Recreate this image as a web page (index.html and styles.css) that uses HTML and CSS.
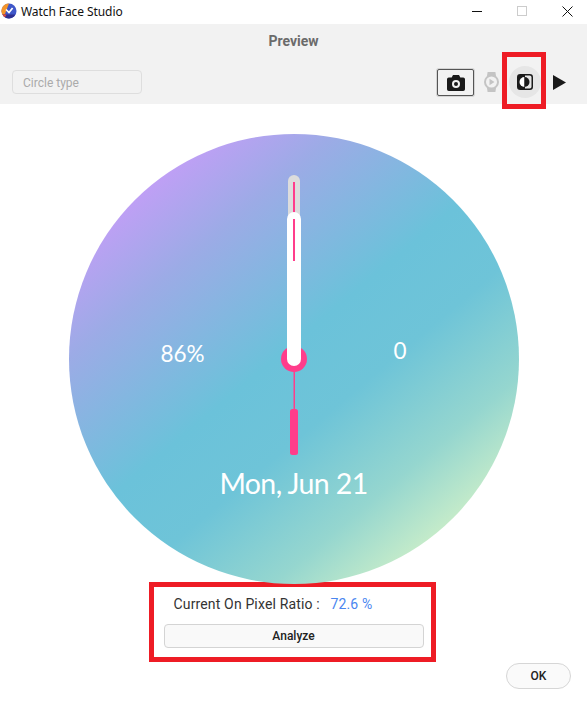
FILE: index.html
```html
<!DOCTYPE html>
<html lang="en">
<head>
<meta charset="utf-8">
<title>Watch Face Studio</title>
<link rel="stylesheet" href="styles.css">
</head>
<body>
<div class="app">
  <div class="titlebar">
    <svg class="logo" width="16" height="16" viewBox="0 0 16 16">
      <circle cx="8" cy="8" r="7.500" fill="#3f57c9"/>
      <path d="M8 .5A7.5 7.5 0 0 0 3 13.6L8 .5z" fill="#f4952b"/>
      <path d="M1.5 11.6A7.5 7.5 0 0 0 8 15.5a7.5 7.5 0 0 0 6.400-3.900z" fill="#2f2f8f"/>
      <path d="M1.5 11.6A7.5 7.5 0 0 0 4 14.300l1.500-2.700z" fill="#e4483c"/>
      <path d="M5 6.500l3 3 3.600-4.500" fill="none" stroke="#fff" stroke-width="1.700"/>
    </svg>
    <span class="app-name">Watch Face Studio</span>
    <div class="window-controls">
      <svg width="10" height="10" viewBox="0 0 10 10"><path d="M0 5.500h10" stroke="#111" stroke-width="1"/></svg>
      <svg width="10" height="10" viewBox="0 0 10 10"><rect x=".5" y=".5" width="9" height="9" fill="none" stroke="#ccc"/></svg>
      <svg width="11" height="11" viewBox="0 0 11 11"><path d="M.5.5l10 10M10.500.5l-10 10" stroke="#111" stroke-width="1"/></svg>
    </div>
  </div>

  <header class="header">
    <div class="header-title">Preview</div>
    <div class="toolbar">
      <div class="select">Circle type</div>
      <div class="tools">
        <button class="tool-camera" type="button">
          <svg width="18" height="16" viewBox="0 0 18 16">
            <path fill="#1a1a1a" d="M6 0h6l1.300 2.500H16.200A1.800 1.800 0 0 1 18 4.300v9.900a1.800 1.800 0 0 1-1.800 1.800H1.800A1.800 1.800 0 0 1 0 14.200V4.300a1.800 1.800 0 0 1 1.800-1.800H4.700z"/>
            <circle cx="9" cy="9" r="4" fill="#f2f2f2"/>
            <circle cx="9" cy="9" r="2" fill="#1a1a1a"/>
          </svg>
        </button>
        <svg class="tool-watch" width="15" height="20" viewBox="0 0 15 20">
          <path d="M3 4l.6-4h7.800l.6 4zM3 16l.6 4h7.800l.6-4z" fill="#c4c4c4"/>
          <circle cx="7.500" cy="10" r="6.500" fill="#f2f2f2" stroke="#c4c4c4" stroke-width="2"/>
          <path d="M5.500 6.800v6.400l5-3.200z" fill="#c4c4c4"/>
        </svg>
        <div class="tool-contrast">
          <svg width="16" height="16" viewBox="0 0 16 16">
            <rect x=".75" y=".75" width="14.500" height="14.500" rx="2.500" fill="#e6e6e6" stroke="#1a1a1a" stroke-width="1.500"/>
            <path d="M1 1h7v14H1z" fill="#1a1a1a"/>
            <path d="M7.500 3a5 5 0 0 0 0 10z" fill="#fff"/>
            <path d="M7.500 3a5 5 0 0 1 0 10z" fill="#1a1a1a"/>
          </svg>
        </div>
        <svg class="tool-play" width="13" height="15" viewBox="0 0 13 15"><path d="M0 0l13 7.500L0 15z" fill="#1a1a1a"/></svg>
      </div>
    </div>
    <div class="marker marker-tool"></div>
  </header>

  <main class="stage">
    <div class="watch">
      <svg class="hands" width="450" height="450" viewBox="0 0 450 450">
        <rect x="219" y="41" width="12" height="80" rx="6" fill="#dcdcdc"/>
        <rect x="224" y="48" width="2" height="50" fill="#ff3d8b"/>
        <circle cx="225" cy="225" r="13" fill="#ff3d8b"/>
        <rect x="224.500" y="236" width="1.500" height="42" fill="#ff3d8b"/>
        <rect x="221" y="275" width="8" height="46" rx="2.500" fill="#ff3d8b"/>
        <rect x="218" y="78" width="14" height="154" rx="7" fill="#fff"/>
        <rect x="224" y="85" width="2" height="42" fill="#ff3d8b"/>
      </svg>
      <span class="complication complication-left">86%</span>
      <span class="complication complication-right">0</span>
      <span class="date">Mon, Jun 21</span>
    </div>
    <section class="ratio-box">
      <div class="ratio-line">
        <span class="ratio-label">Current On Pixel Ratio :</span>
        <span class="ratio-value">72.6 %</span>
      </div>
      <button class="analyze" type="button">Analyze</button>
    </section>
  </main>

  <footer class="footer">
    <button class="ok" type="button">OK</button>
  </footer>
</div>
</body>
</html>
```

FILE: styles.css
```css
* { box-sizing: border-box; }
html, body { margin: 0; padding: 0; background: #fff; }
body { font-family: Roboto, "Liberation Sans", sans-serif; color: #222; }
button { font-family: inherit; cursor: default; }

.app { width: 587px; height: 701px; display: flex; flex-direction: column; overflow: hidden; }

.titlebar { height: 24px; display: flex; align-items: center; padding: 0 0 2px 1px; background: #fff; }
.logo { flex: none; }
.app-name { margin-left: 4px; font-family: "Noto Sans", "Liberation Sans", sans-serif; font-size: 12px; letter-spacing: -.08px; color: #111; }
.window-controls { margin-left: auto; display: flex; align-items: center; gap: 35px; padding-right: 14px; }

.header { position: relative; height: 80px; background: #f2f2f2; display: flex; flex-direction: column; }
.header-title { height: 34px; padding-top: 9px; text-align: center; font-size: 14px; line-height: 16px; font-weight: 700; color: #6b6b6b; }
.toolbar { flex: 1; display: flex; align-items: flex-start; justify-content: space-between; padding: 12px 21px 0 12px; }
.select { width: 130px; height: 24px; border: 1px solid #dedede; border-radius: 4px; padding-left: 10px; font-size: 12px; line-height: 24px; color: #ababab; }
.tools { display: flex; align-items: center; height: 24px; }
.tool-camera { width: 37px; height: 27px; margin-top: 1px; padding: 0; display: flex; align-items: center; justify-content: center; background: #f2f2f2; border: 1px solid #555; border-radius: 2px; box-shadow: 0 0 0 1px #d4d4d4; }
.tool-watch { margin-left: 10px; }
.tool-contrast { width: 32px; height: 32px; margin-left: 10px; display: flex; align-items: center; justify-content: center; border-radius: 50%; background: #e6e6e6; }
.tool-play { margin-left: 12px; }

.marker { position: absolute; border: 5px solid #ee1c25; }
.marker-tool { left: 502px; top: 28px; width: 44px; height: 57px; }

.stage { flex: 1; display: flex; flex-direction: column; align-items: center; padding-top: 30px; }
.watch { position: relative; flex: none; width: 450px; height: 450px; border-radius: 50%; background: linear-gradient(140deg, #c69df8 12%, #9cabe6 27%, #6bc2da 48%, #6ec4d8 60%, #95d6cf 75%, #d4f2c8 89%); color: #fff; font-family: Lato, sans-serif; }
.hands { position: absolute; left: 0; top: 0; }
.complication { position: absolute; font-size: 22.5px; line-height: 28px; }
.complication-left { left: 92px; top: 206px; }
.complication-right { left: 325px; top: 203px; }
.date { position: absolute; left: 0; right: 0; top: 331px; text-align: center; font-size: 28.5px; line-height: 36px; letter-spacing: -.6px; }

.ratio-box { width: 287px; height: 80px; margin-top: -2px; margin-left: -3px; padding: 7px 10px 0; border: 5px solid #ee1c25; background: #fff; }
.ratio-line { height: 21px; padding-left: 10px; font-size: 14px; line-height: 21px; letter-spacing: .15px; white-space: nowrap; }
.ratio-label { color: #333; }
.ratio-value { margin-left: 7px; color: #4a86f0; }
.analyze { display: block; width: 260px; height: 24px; margin-top: 9px; padding: 0; border: 1px solid #d4d4d4; border-radius: 4px; background: #f9f9f9; font-size: 12px; font-weight: 500; color: #222; }

.footer { display: flex; justify-content: flex-end; padding: 0 16px 12px 0; }
.ok { width: 65px; height: 26px; padding: 0; border: 1px solid #d6d6d6; border-radius: 13px; background: #fafafa; font-size: 12px; font-weight: 500; color: #222; }
```
